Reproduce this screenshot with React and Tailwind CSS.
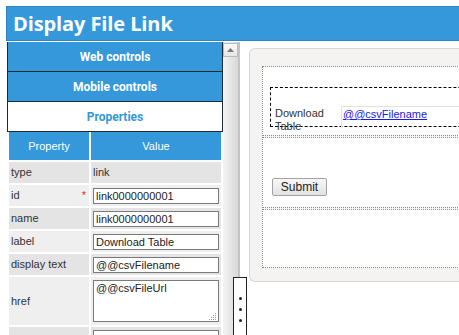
import React from "react";

const rows = [
  { k: "type", v: "link", kind: "text" },
  { k: "id", v: "link0000000001", kind: "input", req: true },
  { k: "name", v: "link0000000001", kind: "input" },
  { k: "label", v: "Download Table", kind: "input" },
  { k: "display text", v: "@@csvFilename", kind: "input" },
  { k: "href", v: "@@csvFileUrl", kind: "area" },
  { k: "", v: "", kind: "input" },
];

function Row({ r, i }) {
  const bg = i % 2 === 0 ? "bg-[#e4e4e4]" : "bg-[#efefef]";
  const h = r.kind === "area" ? "h-[48px]" : "h-[21px]";
  return (
    <>
      <div className={`${bg} ${h} relative flex items-center pl-[2px] text-[11px] text-[#333]`}>
        {r.k}
        {r.req && (
          <span className="absolute right-[3px] top-[3px] text-[10px] text-[#e02020]">*</span>
        )}
      </div>
      <div className={`${bg} ${h} flex items-center pl-[2px] text-[11px] text-[#333]`}>
        {r.kind === "text" && <span>{r.v}</span>}
        {r.kind === "input" && (
          <div className="w-[126px] h-[16px] border border-[#7a7a7a] bg-white pl-[2px] leading-[14px] text-[11px] text-[#222] overflow-hidden whitespace-nowrap">
            {r.v}
          </div>
        )}
        {r.kind === "area" && (
          <div className="relative w-[126px] h-[42px] border border-[#7a7a7a] bg-white pl-[2px] leading-[14px] text-[11px] text-[#222]">
            {r.v}
            <svg className="absolute right-[1px] bottom-[1px]" width="8" height="8" viewBox="0 0 8 8">
              <g fill="#9a9a9a">
                <rect x="6" y="1" width="1" height="1" />
                <rect x="4" y="3" width="1" height="1" />
                <rect x="6" y="3" width="1" height="1" />
                <rect x="2" y="5" width="1" height="1" />
                <rect x="4" y="5" width="1" height="1" />
                <rect x="6" y="5" width="1" height="1" />
                <rect x="0" y="7" width="1" height="1" />
                <rect x="2" y="7" width="1" height="1" />
                <rect x="4" y="7" width="1" height="1" />
                <rect x="6" y="7" width="1" height="1" />
              </g>
            </svg>
          </div>
        )}
      </div>
    </>
  );
}

export default function App() {
  return (
    <div className="w-[459px] h-[335px] overflow-hidden bg-white relative font-['Liberation_Sans',Arial,sans-serif]">
      <div className="pt-[6px] pl-[6px]">
        <div className="h-[35px] bg-[#3498db] border-l border-t border-b border-[#2c86c4] flex items-center pl-[6px]">
          <span className="font-['Open_Sans',sans-serif] font-bold text-[20px] text-white leading-none tracking-[-0.1px]">
            Display File Link
          </span>
        </div>
        <div className="flex mt-[1px] h-[300px]">
          {/* left column */}
          <div className="shrink-0 ml-[1px] w-[216px] flex flex-col">
            <div className="shrink-0 h-[30px] bg-[#3498db] border-x border-b border-[#1e2a38] flex items-center justify-center font-['Roboto',sans-serif] font-bold text-[12px] text-white">
              Web controls
            </div>
            <div className="shrink-0 h-[30px] bg-[#3498db] border-x border-b border-[#1e2a38] flex items-center justify-center font-['Roboto',sans-serif] font-bold text-[12px] text-white">
              Mobile controls
            </div>
            <div className="shrink-0 h-[30px] bg-white border-x border-b border-[#1e2a38] flex items-center justify-center font-['Roboto',sans-serif] font-bold text-[12px] text-[#3498db]">
              Properties
            </div>
            <div className="shrink-0 grid grid-cols-[80px_130px] gap-[2px] pl-[2px]">
              <div className="h-[28px] bg-[#3498db] flex items-center justify-center text-[11px] text-white">Property</div>
              <div className="h-[28px] bg-[#3498db] flex items-center justify-center text-[11px] text-white">Value</div>
              {rows.map((r, i) => (
                <Row key={i} r={r} i={i} />
              ))}
            </div>
          </div>
          {/* scrollbar */}
          <div className="shrink-0 w-[15px] bg-gradient-to-r from-[#f4f4f4] to-[#d8d8d8] pt-[1px]">
            <div className="h-[14px] border border-[#bcbcbc] bg-gradient-to-b from-[#fafafa] to-[#e6e6e6] flex items-center justify-center">
              <svg width="7" height="4" viewBox="0 0 7 4">
                <path d="M3.5 0 L7 4 L0 4 Z" fill="#7a7a7a" />
              </svg>
            </div>
          </div>
          {/* splitter line */}
          <div className="shrink-0 w-[2px] h-[235px] bg-[#c4c4c4]" />
          {/* right area */}
          <div className="shrink-0 ml-[9px] mt-[6px]">
            <div className="w-[240px] h-[234px] bg-[#f4f3f1] border-t border-l border-b border-[#d6d6d6] rounded-l-[6px] pt-[17px] pl-[12px]">
              <div className="w-[240px] h-[70px] bg-white border border-dotted border-[#8a8a8a] pt-[20px] pl-[7px]">
                <div className="h-[40px] border border-dashed border-black pt-[19px] pl-[4px] flex items-start">
                  <div className="shrink-0 w-[66px] text-[11px] leading-[13px] text-[#333]">Download Table</div>
                  <div className="flex-1 h-[22px] -mt-[1px] border-l border-t border-[#e2e2e2] pl-[1px] pt-[1px] text-[11px] leading-[13px]">
                    <span className="text-[#1a1aee] underline">@@csvFilename</span>
                  </div>
                </div>
              </div>
              <div className="mt-[1px] w-[240px] h-[71px] bg-white border border-dotted border-[#8a8a8a] pt-[40px] pl-[9px]">
                <div className="w-[55px] h-[18px] border border-[#a3a3a3] rounded-[2px] bg-gradient-to-b from-[#f8f8f8] to-[#e2e2e2] flex items-center justify-center text-[12px] text-[#222]">
                  Submit
                </div>
              </div>
              <div className="mt-[1px] w-[240px] h-[59px] bg-white border border-dotted border-[#8a8a8a]" />
            </div>
          </div>
        </div>
      </div>
      {/* splitter handle overlay */}
      <div className="absolute left-[233px] top-[277px] w-[14px] h-[70px] border border-[#222] bg-white flex flex-col items-center pt-[19px] gap-[8px]">
        <div className="w-[3px] h-[3px] rounded-full bg-[#222]" />
        <div className="w-[3px] h-[3px] rounded-full bg-[#222]" />
        <div className="w-[3px] h-[3px] rounded-full bg-[#222]" />
      </div>
    </div>
  );
}
